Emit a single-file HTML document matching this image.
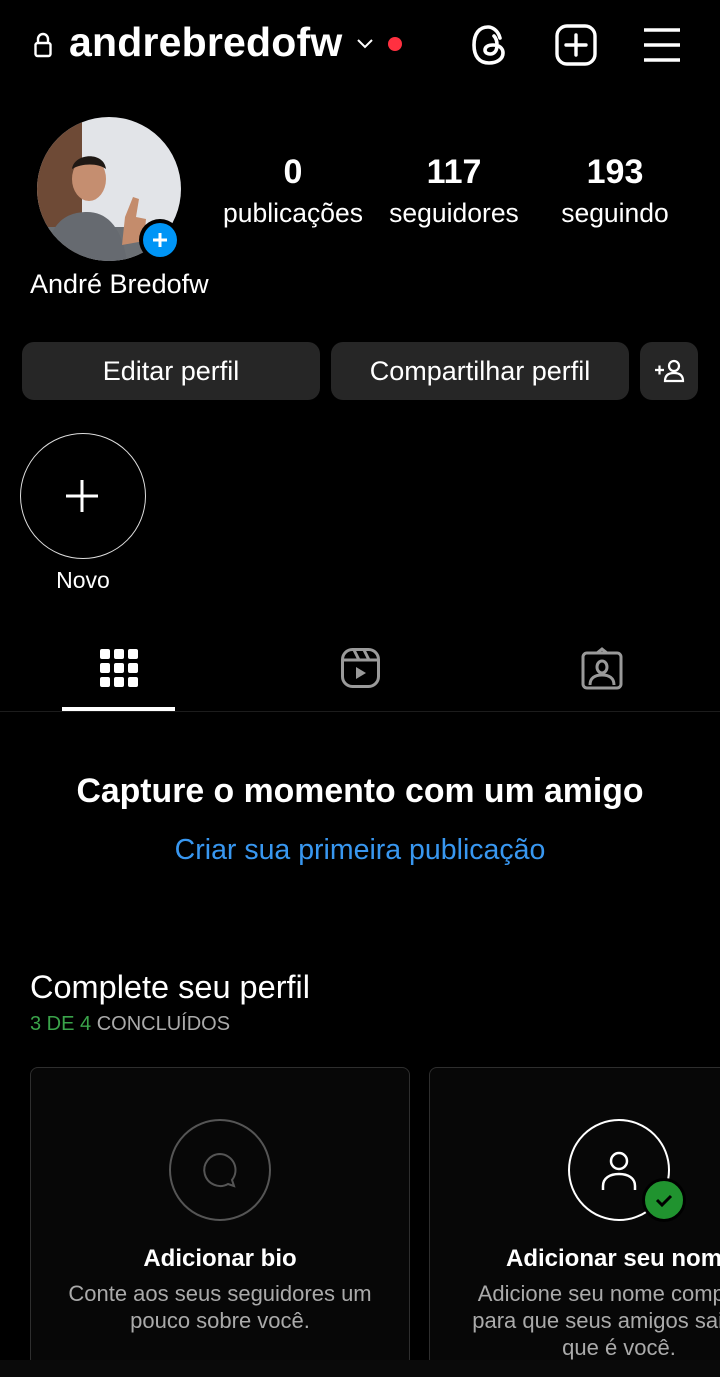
<!DOCTYPE html>
<html><head><meta charset="utf-8"><style>
*{margin:0;padding:0;box-sizing:border-box}
body{width:720px;height:1377px;background:#000;color:#fff;font-family:"Liberation Sans",sans-serif;position:relative;overflow:hidden}
.a{position:absolute}
.c{text-align:center}
.btn{position:absolute;top:342px;height:58px;background:#262626;border-radius:12px;font-size:27px;display:flex;align-items:center;justify-content:center}
.card{position:absolute;top:1067px;height:300px;border:1.5px solid #2e2e2e;border-radius:8px;background:#070707;overflow:hidden}
</style></head><body>
<!-- header -->
<svg class="a" style="left:33px;top:31px" width="20" height="28" viewBox="0 0 20 28"><path d="M5 12V8a5 5 0 0 1 10 0v4" fill="none" stroke="#fff" stroke-width="2.4"/><rect x="2.5" y="12" width="15" height="13" rx="2" fill="none" stroke="#fff" stroke-width="2.4"/></svg>
<div class="a" style="left:69px;top:19px;font-size:41px;font-weight:bold;letter-spacing:0.2px">andrebredofw</div>
<svg class="a" style="left:356px;top:38px" width="18" height="12" viewBox="0 0 18 12"><path d="M2 2l7 7 7-7" fill="none" stroke="#fff" stroke-width="2"/></svg>
<div class="a" style="left:388px;top:37px;width:14px;height:14px;border-radius:50%;background:#ff3040"></div>
<svg class="a" style="left:470px;top:24px" width="40" height="42" viewBox="0 0 40 42"><path d="M30 14C28 6 22 3 18 3 9 3 4 10 4 21s5 18 15 18c8 0 14-4 14-10 0-5-4-8-10-8-5 0-8 2-8 5 0 3 3 4 5 4 5 0 7-4 7-9 0-4-1-7-3-9" fill="none" stroke="#fff" stroke-width="3.6" stroke-linecap="round"/></svg>
<svg class="a" style="left:555px;top:24px" width="42" height="42" viewBox="0 0 42 42"><rect x="2" y="2" width="38" height="38" rx="10" fill="none" stroke="#fff" stroke-width="3.4"/><path d="M21 11v20M11 21h20" stroke="#fff" stroke-width="3.4" stroke-linecap="round"/></svg>
<svg class="a" style="left:642px;top:27px" width="40" height="36" viewBox="0 0 40 36"><path d="M2 3h36M2 18h36M2 33h36" stroke="#fff" stroke-width="3.4"/></svg>
<!-- avatar -->
<svg class="a" style="left:37px;top:117px" width="145" height="145" viewBox="0 0 145 145"><defs><clipPath id="cp"><circle cx="72" cy="72" r="72"/></clipPath></defs><g clip-path="url(#cp)"><rect width="145" height="145" fill="#e2e4e8"/><rect width="45" height="145" fill="#6e4a36"/><rect x="0" y="110" width="145" height="40" fill="#6b6f74"/><ellipse cx="52" cy="62" rx="17" ry="22" fill="#c58e70"/><path d="M35 52c2-16 32-18 34 0-8-6-24-6-34 0z" fill="#1e1814"/><path d="M10 145c0-40 20-50 40-50s35 15 40 50z" fill="#666a70"/><path d="M88 100l8-20 6 2-3 18 10 2-2 22-22 4z" fill="#c48c6c"/></g></svg>
<div class="a" style="left:139px;top:219px;width:42px;height:42px;border-radius:50%;background:#000"></div>
<div class="a" style="left:143px;top:223px;width:34px;height:34px;border-radius:50%;background:#0095f6"></div>
<svg class="a" style="left:143px;top:223px" width="34" height="34"><path d="M17 10v14M10 17h14" stroke="#fff" stroke-width="3"/></svg>
<!-- stats -->
<div class="a c" style="left:203px;width:180px;top:153px;font-size:34px;font-weight:bold">0</div>
<div class="a c" style="left:203px;width:180px;top:198px;font-size:26.5px">publicações</div>
<div class="a c" style="left:365px;width:178px;top:153px;font-size:34px;font-weight:bold">117</div>
<div class="a c" style="left:365px;width:178px;top:198px;font-size:26.5px">seguidores</div>
<div class="a c" style="left:525px;width:180px;top:153px;font-size:34px;font-weight:bold">193</div>
<div class="a c" style="left:525px;width:180px;top:198px;font-size:26.5px">seguindo</div>
<div class="a" style="left:30px;top:269px;font-size:27px">André Bredofw</div>
<!-- buttons -->
<div class="btn" style="left:22px;width:298px">Editar perfil</div>
<div class="btn" style="left:331px;width:298px">Compartilhar perfil</div>
<div class="btn" style="left:640px;width:58px"><svg width="32" height="26" viewBox="0 0 32 26"><path d="M2 12h9M6.5 7.5v9" stroke="#fff" stroke-width="2.2"/><circle cx="21" cy="8" r="5" fill="none" stroke="#fff" stroke-width="2.2"/><path d="M12 23c0-6 4-8 9-8s9 2 9 8z" fill="none" stroke="#fff" stroke-width="2.2"/></svg></div>
<!-- highlight -->
<div class="a" style="left:20px;top:433px;width:126px;height:126px;border-radius:50%;border:1.5px solid #ddd"></div>
<svg class="a" style="left:64px;top:478px" width="36" height="36"><path d="M18 2v32M2 18h32" stroke="#fff" stroke-width="3"/></svg>
<div class="a c" style="left:20px;width:126px;top:567px;font-size:23px">Novo</div>
<!-- tabs -->
<svg class="a" style="left:100px;top:649px" width="38" height="38" viewBox="0 0 38 38" fill="#fff"><rect x="0" y="0" width="10" height="10" rx="2"/><rect x="14" y="0" width="10" height="10" rx="2"/><rect x="28" y="0" width="10" height="10" rx="2"/><rect x="0" y="14" width="10" height="10" rx="2"/><rect x="14" y="14" width="10" height="10" rx="2"/><rect x="28" y="14" width="10" height="10" rx="2"/><rect x="0" y="28" width="10" height="10" rx="2"/><rect x="14" y="28" width="10" height="10" rx="2"/><rect x="28" y="28" width="10" height="10" rx="2"/></svg>
<div class="a" style="left:62px;top:707px;width:113px;height:4px;background:#fff"></div>
<div class="a" style="left:0;top:711px;width:720px;height:1px;background:#1c1c1c"></div>
<svg class="a" style="left:340px;top:647px" width="42" height="42" viewBox="0 0 42 42"><rect x="2.5" y="2.5" width="36" height="37" rx="10" fill="none" stroke="#9a9a9a" stroke-width="3"/><path d="M3 13h35M14 3l5 10M24 3l5 10" stroke="#9a9a9a" stroke-width="3"/><path d="M16 20v12l10-6z" fill="#9a9a9a"/></svg>
<svg class="a" style="left:580px;top:647px" width="44" height="44" viewBox="0 0 44 44"><rect x="3" y="6" width="38" height="35" rx="4" fill="none" stroke="#9a9a9a" stroke-width="3"/><path d="M17 6l5-4 5 4" fill="none" stroke="#9a9a9a" stroke-width="3"/><ellipse cx="22" cy="20" rx="5" ry="6" fill="none" stroke="#9a9a9a" stroke-width="3"/><path d="M10 38c0-7 5-10 12-10s12 3 12 10" fill="none" stroke="#9a9a9a" stroke-width="3"/></svg>
<!-- empty state -->
<div class="a c" style="left:0;width:720px;top:772px;font-size:33.8px;font-weight:bold">Capture o momento com um amigo</div>
<div class="a c" style="left:0;width:720px;top:834px;font-size:28.5px;color:#3897f0">Criar sua primeira publicação</div>
<div class="a" style="left:30px;top:969px;font-size:32.5px">Complete seu perfil</div>
<div class="a" style="left:30px;top:1013px;font-size:20px;color:#aaa"><span style="color:#3aa34a">3 DE 4</span> CONCLUÍDOS</div>
<!-- cards -->
<div class="card" style="left:30px;width:380px">
<div class="a" style="left:138px;top:51px;width:102px;height:102px;border-radius:50%;border:2px solid #555"></div>
<svg class="a" style="left:169px;top:83px" width="40" height="40" viewBox="0 0 40 40"><path d="M20 3a16 16 0 1 0 8 30l6 2-2-6A16 16 0 0 0 20 3z" fill="none" stroke="#555" stroke-width="2"/></svg>
<div class="a c" style="left:0;width:378px;top:177px;font-size:24px;font-weight:bold">Adicionar bio</div>
<div class="a c" style="left:0;width:378px;top:212px;font-size:22px;line-height:27px;color:#aaa">Conte aos seus seguidores um<br>pouco sobre você.</div>
</div>
<div class="card" style="left:429px;width:291px;border-right:none;border-radius:8px 0 0 8px">
<div class="a" style="left:138px;top:51px;width:102px;height:102px;border-radius:50%;border:2.5px solid #fff"></div>
<svg class="a" style="left:165px;top:78px" width="48" height="48" viewBox="0 0 48 48"><circle cx="24" cy="15" r="8" fill="none" stroke="#fff" stroke-width="2.5"/><path d="M8 44v-4c0-8 7-12 16-12s16 4 16 12v4" fill="none" stroke="#fff" stroke-width="2.5"/></svg>
<div class="a" style="left:212px;top:110px;width:44px;height:44px;border-radius:50%;background:#20932f;border:3px solid #000"></div>
<svg class="a" style="left:215px;top:113px" width="38" height="38"><path d="M12 19l5 5 9-9" fill="none" stroke="#000" stroke-width="3"/></svg>
<div class="a" style="left:76px;top:177px;font-size:24px;font-weight:bold;white-space:nowrap">Adicionar seu nome</div>
<div class="a c" style="left:0;width:378px;top:212px;font-size:22px;line-height:27px;color:#aaa;white-space:nowrap">Adicione seu nome completo<br>para que seus amigos saibam<br>que é você.</div>
</div>
<div class="a" style="left:0;top:1360px;width:720px;height:17px;background:#0a0a0a"></div>
</body></html>
